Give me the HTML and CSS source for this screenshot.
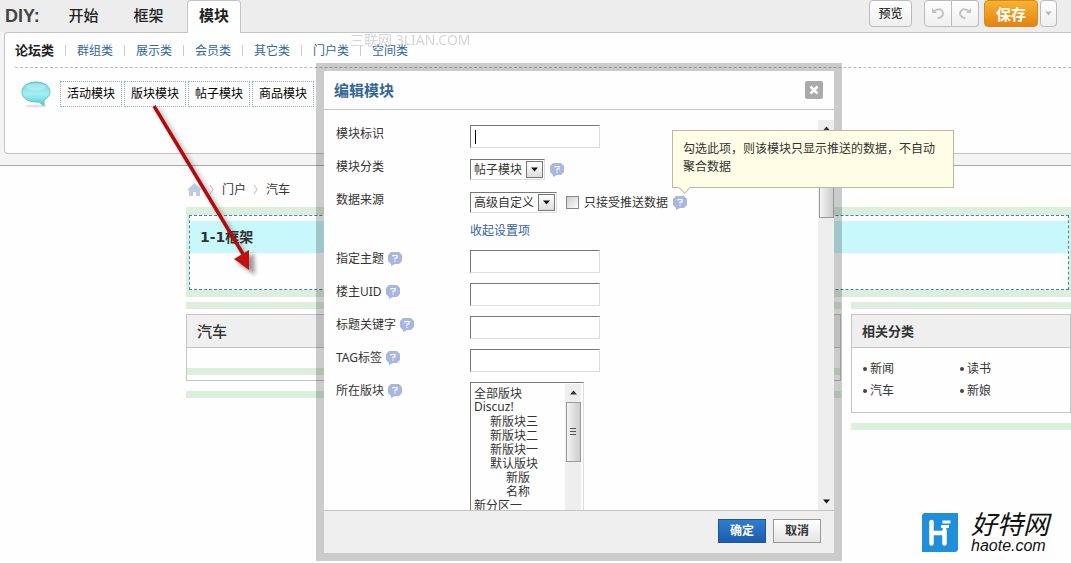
FILE: index.html
```html
<!DOCTYPE html>
<html lang="zh-CN">
<head>
<meta charset="utf-8">
<title>DIY</title>
<link rel="stylesheet" href="styles.css">
</head>
<body>
<svg class="defs" aria-hidden="true">
  <symbol id="help" viewBox="0 0 14 14">
    <path d="M3 0h8l3 3v6l-3 3H7l-4 2v-2L0 9V3z" fill="#a9b6dd"/>
    <path d="M5 4.500V3.500h4v2.500H7v1.500M7 8.500v1.200" fill="none" stroke="#fff" stroke-width="1.200"/>
  </symbol>
  <symbol id="down" viewBox="0 0 9 5"><path d="M1 0.500h7L4.500 4.500z" fill="#111"/></symbol>
  <symbol id="up" viewBox="0 0 9 5"><path d="M1 4.500h7L4.500 0.500z" fill="#333"/></symbol>
</svg>

<header class="diy">
  <div class="toolbar">
    <strong class="brand">DIY:</strong>
    <nav class="tabs">
      <a href="#start">开始</a>
      <a href="#frame">框架</a>
      <a href="#module" class="active">模块</a>
    </nav>
    <div class="actions">
      <button class="btn preview">预览</button>
      <div class="pair">
        <button class="btn" aria-label="撤销"><svg width="14" height="13" viewBox="0 0 14 13"><path d="M1 1v5h5z" fill="#c3c3c3"/><path d="M3 4.500Q6 1.500 9.500 2.500 13 4.500 11.500 8.500 9.500 11.500 6.500 11" fill="none" stroke="#c3c3c3" stroke-width="2"/></svg></button>
        <button class="btn" aria-label="重做"><svg width="14" height="13" viewBox="0 0 14 13"><path d="M13 1v5H8z" fill="#c3c3c3"/><path d="M11 4.500Q8 1.500 4.500 2.500 1 4.500 2.500 8.500 4.500 11.500 7.500 11" fill="none" stroke="#c3c3c3" stroke-width="2"/></svg></button>
      </div>
      <button class="btn save">保存</button>
      <button class="btn more" aria-label="更多"><svg width="7" height="5" viewBox="0 0 9 5"><path d="M0 0h9L4.500 5z" fill="#bbb"/></svg></button>
    </div>
  </div>
  <div class="panel">
    <nav class="kinds">
      <a href="#forum" class="active">论坛类</a>
      <a href="#group">群组类</a>
      <a href="#show">展示类</a>
      <a href="#member">会员类</a>
      <a href="#other">其它类</a>
      <a href="#portal">门户类</a>
      <a href="#space">空间类</a>
    </nav>
    <div class="modules">
      <svg class="bubble" width="30" height="27" viewBox="0 0 30 27">
        <defs><linearGradient id="bg" x1="0" y1="0" x2="0" y2="1"><stop offset="0" stop-color="#6fd6da"/><stop offset=".5" stop-color="#a4f0f2"/><stop offset="1" stop-color="#4fc9d2"/></linearGradient></defs>
        <ellipse cx="15" cy="25" rx="11" ry="1.500" fill="#eddde2"/>
        <path d="M15 1C7 1 1 5 1 11s6 10 14 10h3l5 4v-6c3-2 6-4 6-8 0-6-6-10-14-10z" fill="url(#bg)" stroke="#5bc3c8"/>
        <ellipse cx="15" cy="6" rx="10" ry="3.500" fill="#fff" opacity=".3"/>
      </svg>
      <button>活动模块</button>
      <button>版块模块</button>
      <button>帖子模块</button>
      <button>商品模块</button>
    </div>
  </div>
</header>

<main class="page">
  <nav class="crumbs">
    <a href="#home" aria-label="首页"><svg width="15" height="13" viewBox="0 0 15 13"><path d="M7.500 0L15 7h-2v6H9V9H6v4H2V7H0z" fill="#bccbdf"/></svg></a>
    <svg class="sep" width="5" height="11" viewBox="0 0 5 11"><path d="M1 1q3 4 3 4.500T1 10" fill="none" stroke="#bbb"/></svg>
    <a href="#portal">门户</a>
    <svg class="sep" width="5" height="11" viewBox="0 0 5 11"><path d="M1 1q3 4 3 4.500T1 10" fill="none" stroke="#bbb"/></svg>
    <a href="#car">汽车</a>
  </nav>
  <section class="frame">
    <div class="frame-in"><h2>1-1框架</h2></div>
  </section>
  <div class="columns">
    <div class="col wide">
      <div class="strip"></div>
      <section class="block cars"><h3>汽车</h3><div class="strip"></div></section>
      <div class="strip"></div>
    </div>
    <div class="col side">
      <div class="strip"></div>
      <section class="block">
        <h3 class="small">相关分类</h3>
        <ul>
          <li><a href="#news">新闻</a></li><li><a href="#read">读书</a></li>
          <li><a href="#car">汽车</a></li><li><a href="#bride">新娘</a></li>
        </ul>
      </section>
      <div class="strip"></div>
    </div>
  </div>
</main>

<div class="watermark">三联网 3LIAN.COM</div>

<div class="dialog" role="dialog" aria-labelledby="dlg-title">
  <div class="dlg-head">
    <h2 id="dlg-title">编辑模块</h2>
    <button class="close" aria-label="关闭"><svg width="10" height="10" viewBox="0 0 10 10"><path d="M1.500 1.500l7 7m0-7l-7 7" stroke="#fff" stroke-width="2.500"/></svg></button>
  </div>
  <div class="dlg-main">
    <form class="form">
      <div class="row"><label for="f1">模块标识</label><span class="field text-caret"><input id="f1" type="text"></span></div>
      <div class="row"><label for="f2">模块分类</label><span class="field">
        <span class="pick"><select id="f2" class="w1"><option>帖子模块</option></select><i><svg width="9" height="5"><use href="#down"/></svg></i></span>
        <svg class="help"><use href="#help"/></svg></span></div>
      <div class="row"><label for="f3">数据来源</label><span class="field">
        <span class="pick"><select id="f3" class="w2"><option>高级自定义</option></select><i><svg width="9" height="5"><use href="#down"/></svg></i></span>
        <label class="check"><input type="checkbox">只接受推送数据</label>
        <svg class="help"><use href="#help"/></svg></span></div>
      <div class="row link"><span></span><a href="#fold">收起设置项</a></div>
      <div class="row"><label for="f4">指定主题<svg class="help"><use href="#help"/></svg></label><span class="field"><input id="f4" type="text"></span></div>
      <div class="row"><label for="f5">楼主UID<svg class="help"><use href="#help"/></svg></label><span class="field"><input id="f5" type="text"></span></div>
      <div class="row"><label for="f6">标题关键字<svg class="help"><use href="#help"/></svg></label><span class="field"><input id="f6" type="text"></span></div>
      <div class="row"><label for="f7">TAG标签<svg class="help"><use href="#help"/></svg></label><span class="field"><input id="f7" type="text"></span></div>
      <div class="row"><label for="f8">所在版块<svg class="help"><use href="#help"/></svg></label>
        <div class="list">
          <select id="f8" multiple size="10">
            <option>全部版块</option>
            <option>Discuz!</option>
            <option class="l1">新版块三</option>
            <option class="l1">新版块二</option>
            <option class="l1">新版块一</option>
            <option class="l1">默认版块</option>
            <option class="l2">新版</option>
            <option class="l2">名称</option>
            <option>新分区一</option>
          </select>
          <div class="bar" aria-hidden="true"><svg width="9" height="5"><use href="#up"/></svg><div class="thumb grip"></div></div>
        </div>
      </div>
    </form>
    <div class="bar main-bar" aria-hidden="true"><svg width="9" height="5"><use href="#up"/></svg><div class="thumb"></div><svg class="end" width="9" height="5"><use href="#down"/></svg></div>
  </div>
  <div class="dlg-foot">
    <button class="ok">确定</button>
    <button class="cancel">取消</button>
  </div>
</div>

<div class="tip" role="tooltip">勾选此项，则该模块只显示推送的数据，不自动聚合数据</div>

<svg class="pointer" width="120" height="180" viewBox="0 0 120 180" aria-hidden="true">
  <path class="shade" d="M10 9L98 156" stroke="#000" stroke-width="4" opacity=".25"/>
  <path class="shade" d="M89 163l17-10 1 22z" opacity=".4"/>
  <path d="M6 6L95 154" stroke="#b5090c" stroke-width="3.500"/>
  <path d="M86 159l15-9 0 20z" fill="#c40d0d"/>
</svg>

<div class="logo">
  <svg width="36" height="39" viewBox="0 0 36 39"><path d="M2 0h34v37l-2 2H0V2z" fill="#1f8fdb"/><path d="M9.500 9v21.500M22.500 17v13.500M9.500 20h13" fill="none" stroke="#fff" stroke-width="4.500" stroke-linecap="round"/><path d="M20.500 9h8M19 13.500h8" stroke="#fff" stroke-width="3"/></svg>
  <div><b>好特网</b><span>haote.com</span></div>
</div>
</body>
</html>
```

FILE: styles.css
```css
* { box-sizing: border-box; }
body {
  margin: 0;
  min-height: 100vh;
  position: relative;
  overflow: hidden;
  background: #fefefe;
  color: #333;
  font: 12px/18px "Noto Sans", "Noto Sans CJK SC", sans-serif;
}
h2, h3, ul { margin: 0; padding: 0; }
a { color: inherit; text-decoration: none; }
button, input, select { font: inherit; color: inherit; margin: 0; padding: 0; }
button { cursor: pointer; }
svg { display: block; flex: none; }
.defs { position: absolute; width: 0; height: 0; }

.diy { background: #f4f4f4; border-bottom: 1px solid #aaa; padding-bottom: 11px; }
.toolbar { display: flex; height: 32px; background: #ededed; padding: 0 14px 0 5px; }
.brand { width: 52px; color: #444; font: bold 18px/32px "Liberation Sans", sans-serif; }
.tabs { display: flex; gap: 12px; position: relative; z-index: 1; }
.tabs a {
  height: 33px; width: 53px;
  text-align: center;
  font-size: 15px; line-height: 30px; font-weight: 500;
  color: #222;
}
.tabs .active {
  width: 54px;
  background: #fefefe;
  border: 1px solid #c4c4c4; border-width: 1px 1px 0;
  border-radius: 4px 4px 0 0;
  line-height: 28px;
  font-weight: bold;
}
.actions { display: flex; margin-left: auto; }
.btn {
  display: flex; align-items: center; justify-content: center;
  height: 27px;
  background: linear-gradient(#fff, #efefef);
  border: 1px solid #bbb; border-radius: 4px;
}
.preview { width: 43px; margin-right: 12px; font-weight: 500; }
.pair { display: flex; margin-right: 5px; }
.pair .btn { width: 28px; }
.pair .btn:first-child { border-radius: 4px 0 0 4px; }
.pair .btn:last-child { border-radius: 0 4px 4px 0; border-left: 0; width: 27px; }
.save {
  width: 54px; margin-right: 2px;
  background: linear-gradient(#f6b233, #e48310);
  border-color: #d98a1c;
  color: #fff; font-size: 15px; font-weight: bold;
}
.more { width: 17px; }

.panel {
  margin-left: 4px; height: 122px;
  background: #fefefe;
  border: 1px solid #c4c4c4; border-right: 0;
  border-radius: 4px 0 0 4px;
}
.kinds { display: flex; align-items: center; margin-left: 10px; height: 35px; border-bottom: 1px dashed #bbb; color: #369; }
.kinds a { width: 59px; padding-left: 11px; border-left: 1px solid #ccc; line-height: 11px; }
.kinds .active { width: 50px; padding-left: 0; border: 0; color: #222; font-size: 13px; font-weight: bold; }
.modules { display: flex; gap: 2px; padding: 13px 0 0 16px; }
.modules button { width: 62px; height: 26px; border: 1px dotted #9ab; background: #fefefe; color: #000; }
.bubble { margin-right: 7px; }

.page { padding-left: 186px; }
.crumbs { display: flex; align-items: center; gap: 7px; height: 41px; padding: 6px 0 0 1px; }
.sep { margin-right: 1px; }
.frame {
  padding: 8px 2px 7px 3px;
  background: #dcefdc;
}
.frame-in { height: 75px; padding-top: 5px; border: 1px dashed #3388bb; background: #fefefe; }
.frame h2 { background: #c8f8fc; padding-left: 10px; font: bold 14px/32px "DejaVu Sans", "Noto Sans CJK SC", sans-serif; }
.columns { display: flex; gap: 10px; padding-top: 5px; }
.wide { flex: 1; min-width: 0; }
.side { width: 220px; }
.strip { height: 7px; background: #dcefdc; }
.block { margin: 5px 0 10px; border: 1px solid #c4c4c4; background: #fefefe; }
.block h3 { padding-left: 10px; background: #efeff0; border-bottom: 1px solid #c4c4c4; font-size: 15px; line-height: 32px; font-weight: 500; }
.block h3.small { font-size: 13px; font-weight: bold; }
.cars { padding-bottom: 5px; }
.cars .strip { margin-top: 20px; }
.block ul { display: grid; grid-template-columns: 97px 1fr; padding: 10px 11px; list-style: none; line-height: 22px; }
.block li { display: flex; align-items: center; gap: 3px; }
.block li::before { content: ""; width: 4px; height: 4px; border-radius: 2px; background: #444; }

.watermark { position: absolute; left: 350px; top: 31px; font-size: 14px; color: #ccc; opacity: .8; }

.dialog {
  position: absolute; left: 316px; top: 63px;
  width: 526px;
  border: 8px solid rgba(0, 0, 0, .2);
  background: #fefefe; background-clip: padding-box;
}
.dlg-head { display: flex; align-items: center; justify-content: space-between; height: 39px; padding: 0 11px 0 10px; border-bottom: 1px solid #c4c4c4; }
.dlg-head h2 { color: #369; font-size: 15px; }
.close { display: flex; align-items: center; justify-content: center; width: 18px; height: 18px; border: 0; border-radius: 2px; background: #aaa; }
.dlg-main { display: flex; height: 400px; overflow: hidden; }
.form { flex: 1; padding: 15px 0 0 12px; }
.row { display: flex; height: 33px; }
.row.link { height: 26px; color: #369; }
.row > :first-child { display: flex; align-items: center; gap: 4px; width: 134px; height: 18px; }
.row.link a { line-height: 14px; }
.help { width: 14px; height: 14px; }
.field { display: flex; gap: 5px; height: 23px; align-items: center; }
.field input[type="text"] { width: 130px; height: 23px; padding: 0 4px; border: 1px solid #ddd; border-top-color: #777; border-left-color: #777; background: #fff; }
.text-caret { position: relative; }
.text-caret::after { content: ""; position: absolute; left: 5px; top: 5px; width: 1px; height: 14px; background: #000; }
.pick { display: flex; height: 21px; padding: 1px; border: 1px solid #ddd; border-top-color: #777; border-left-color: #777; }
.pick select { appearance: none; border: 0; background: #fefefe; padding-left: 2px; }
.w1 { width: 54px; }
.w2 { width: 66px; }
.pick i { display: flex; align-items: center; justify-content: center; width: 17px; border: 1px solid #777; background: linear-gradient(#fff, #ddd); }
.check { display: flex; align-items: center; gap: 5px; margin-left: 4px; }
.check input { appearance: none; width: 13px; height: 13px; border: 1px solid #888; background: linear-gradient(135deg, #ccc, #fff); }
.list { display: flex; align-self: flex-start; width: 114px; height: 170px; padding: 1px 2px; border: 1px solid #ddd; border-top-color: #777; border-left-color: #777; }
.list select { flex: 1; min-width: 0; height: 165px; border: 0; outline: 0; overflow: hidden; scrollbar-width: none; background: #fefefe; }
.list option { display: block; height: 14px; min-height: 0; padding: 0 1px; line-height: 14px; }
.list .l1 { padding-left: 17px; }
.list .l2 { padding-left: 33px; }
.bar { display: flex; flex-direction: column; align-items: center; width: 16px; padding-top: 6px; background: #eee; }
.thumb { width: 15px; height: 60px; margin-top: 7px; border: 1px solid #999; background: linear-gradient(90deg, #f4f4f4, #ccc); }
.grip { display: flex; align-items: center; justify-content: center; }
.grip::after { content: ""; width: 6px; height: 8px; background: repeating-linear-gradient(#555 0 1px, transparent 1px 3px); }
.main-bar { margin-top: 10px; }
.main-bar .thumb { height: 80px; }
.main-bar .end { margin: auto 0 6px; }
.dlg-foot { display: flex; justify-content: flex-end; gap: 7px; height: 43px; padding: 8px 13px 0 0; background: #efefef; border-top: 1px solid #c4c4c4; }
.dlg-foot button { width: 48px; height: 24px; border: 1px solid #999; font-weight: bold; background: linear-gradient(#fff, #e4e4e4); }
.dlg-foot .ok { border-color: #1c569f; background: linear-gradient(#2f7dd0, #1b5cae); color: #fff; }

.tip {
  position: absolute; left: 672px; top: 130px;
  width: 282px; padding: 9px 18px 11px 10px;
  min-height: 58px;
  border: 1px solid #bbb8a0; background: #fefee6;
}
.tip::after {
  content: ""; position: absolute; left: 7px; bottom: -5px;
  width: 8px; height: 8px;
  background: #fefee6;
  border: 1px solid #bbb8a0; border-width: 0 1px 1px 0;
  transform: rotate(45deg);
}
.pointer { position: absolute; left: 148px; top: 100px; pointer-events: none; }
.shade { filter: blur(2px); }

.logo { position: absolute; right: 22px; bottom: 9px; display: flex; align-items: center; gap: 13px; color: #111; }
.logo div { display: flex; flex-direction: column; }
.logo b { font-size: 26px; line-height: 28px; font-weight: normal; font-style: italic; }
.logo span { font: italic 16px/16px "Liberation Sans", sans-serif; }
```
